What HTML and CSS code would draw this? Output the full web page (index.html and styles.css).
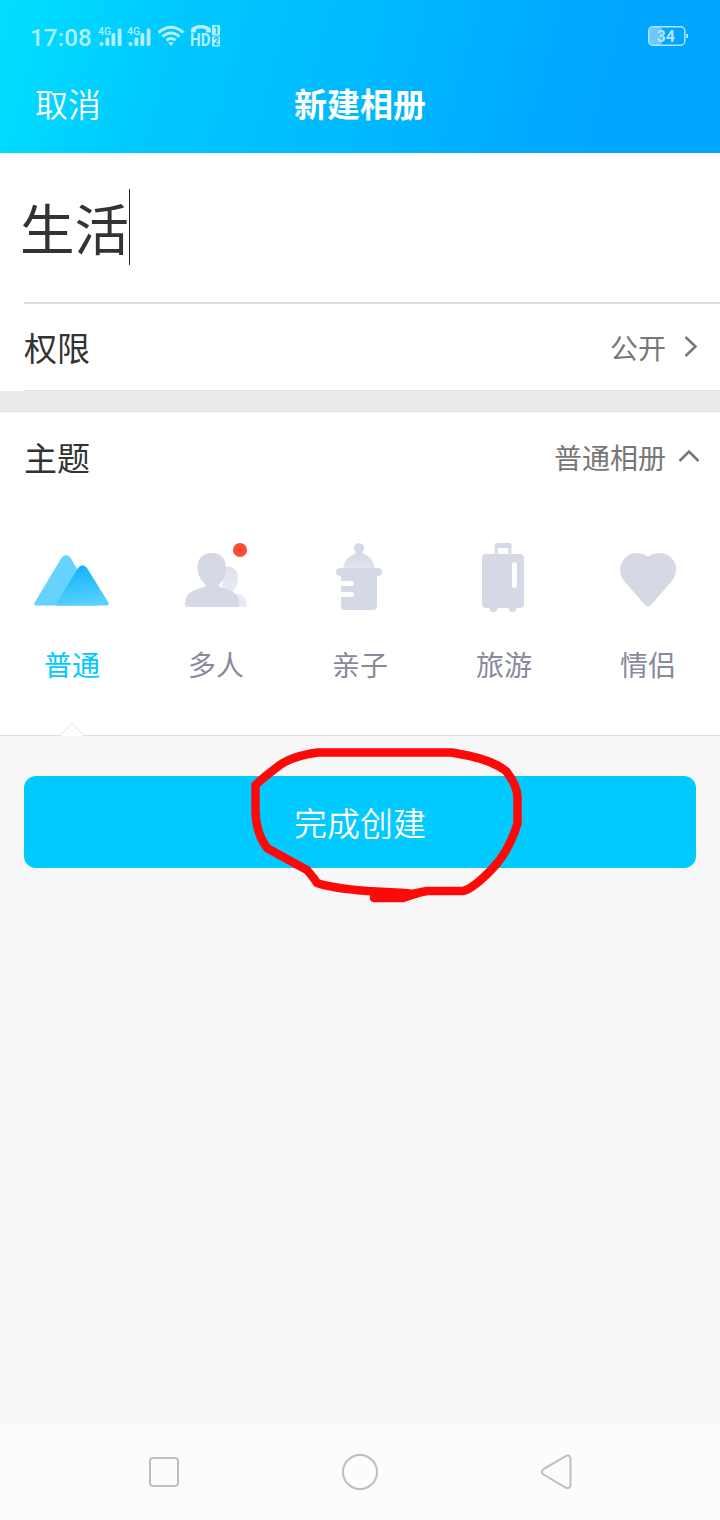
FILE: index.html
```html
<!DOCTYPE html>
<html lang="zh-CN">
<head>
<meta charset="utf-8">
<title>新建相册</title>
<link rel="stylesheet" href="styles.css">
</head>
<body>
<div class="screen">
  <header class="header">
    <div class="status">
      <span class="clock">17:08</span>
      <svg class="signal" width="25" height="24" viewBox="0 0 25 24"><text class="net" x="0" y="10.500">4G</text><g class="fill"><circle cx="3.500" cy="20" r="2"/><rect x="7.500" y="13.500" width="3.800" height="8.500" rx="1.500"/><rect x="13.500" y="9" width="3.800" height="13" rx="1.500"/><rect x="19.700" y="4.500" width="3.800" height="17.500" rx="1.500"/></g></svg>
      <svg class="signal second" width="25" height="24" viewBox="0 0 25 24"><text class="net" x="0" y="10.500">4G</text><g class="fill"><circle cx="3.500" cy="20" r="2"/><rect x="7.500" y="13.500" width="3.800" height="8.500" rx="1.500"/><rect x="13.500" y="9" width="3.800" height="13" rx="1.500"/><rect x="19.700" y="4.500" width="3.800" height="17.500" rx="1.500"/></g></svg>
      <svg class="wifi" width="28" height="22" viewBox="0 0 28 22"><g class="arc"><path d="M1.500 7.500Q14-3 26.500 7.500"/><path d="M5.500 11.500Q14 4.500 22.500 11.500"/><path d="M9.500 15.300Q14 11.800 18.500 15.300"/></g><path class="fill" d="M11.200 17.800Q14 16 16.800 17.800L14 21Z"/></svg>
      <svg class="volte" width="32" height="24" viewBox="0 0 32 24"><path class="fill" d="M1 8.500V5Q4 1 11 1Q18 1 21 5V8.500H16V5.500Q11 3.500 6 5.500V8.500Z"/><text class="hd" transform="translate(0 22.300) scale(.84 1)">HD</text><rect class="fill" x="22" y="1" width="8" height="10.500" rx="1"/><rect class="fill" x="22" y="12.500" width="8" height="10" rx="1"/><text class="sim" x="23.300" y="9.600">1</text><text class="sim" x="23.300" y="20.800">2</text></svg>
      <svg class="battery" width="41" height="20" viewBox="0 0 41 20"><rect class="charge" x="1" y="1" width="13" height="18" rx="3"/><rect class="case" x=".75" y=".75" width="36" height="18.500" rx="4"/><rect class="fill" x="38.200" y="8" width="1.800" height="4"/><text class="level" x="8.500" y="15.600">34</text></svg>
    </div>
    <div class="titlebar">
      <span class="cancel">取消</span>
      <h1 class="title">新建相册</h1>
      <span></span>
    </div>
  </header>

  <section class="name"><span class="value">生活</span><i class="caret"></i></section>

  <section class="row permission">
    <span class="label">权限</span>
    <span class="choice">公开</span>
    <svg class="chevron" width="22" height="26" viewBox="0 0 22 26"><path d="M6.500 3L16.500 12.500L6.500 22"/></svg>
  </section>
  <div class="gap"></div>

  <section class="themes">
    <div class="row">
      <span class="label">主题</span>
      <span class="choice">普通相册</span>
      <svg class="chevron up" width="24" height="20" viewBox="0 0 24 20"><path d="M2.500 14L12 4.500L21.500 14"/></svg>
    </div>
    <div class="tabs">
      <div class="tab active">
        <svg class="icon" width="144" height="80" viewBox="0 530 144 80"><defs><linearGradient id="hill" x1="0.4" y1="0" x2="0.6" y2="1"><stop offset="0" stop-color="#12b1f8"/><stop offset="1" stop-color="#59d2ff"/></linearGradient></defs><path fill="#66d3ff" d="M34.500 602.800L61.500 557.800Q66 552.200 70.500 557.800L98 605.500H36Q33.500 605.200 34.500 602.800Z"/><path fill="url(#hill)" d="M55 605.500L78 568Q82.500 562.500 87 568L108.400 602.500Q109.500 605.200 107 605.500Z"/></svg>
        <span>普通</span>
      </div>
      <div class="tab">
        <svg class="icon" width="144" height="80" viewBox="144 530 144 80"><defs><linearGradient id="friend" x1="0" y1="0" x2="0" y2="1"><stop offset="0" stop-color="#dfe2ed"/><stop offset=".7" stop-color="#e9ecf5"/><stop offset="1" stop-color="#e6e9f4"/></linearGradient></defs><path fill="url(#friend)" d="M224 567C233 565 238 571 238 578C238 584 236 588 233 591Q233 593 238 593.500Q247 596 247 605Q247 607 245 607H220Z"/><path class="shape" d="M212 553C221 553 226 559 226 568C226 576 223 581 218.500 585C219 587 223 588 228 589.500Q239 594 239 602.500Q239 607 235.500 607H187Q185 607 185 604Q185 593 196 589.500C201 588 205 587 206 585C200 580 197.500 574 197.500 567C197.500 558.500 203 553 212 553Z"/></svg>
        <i class="dot"></i>
        <span>多人</span>
      </div>
      <div class="tab">
        <svg class="icon" width="144" height="80" viewBox="288 530 144 80"><defs><linearGradient id="cap" x1="0" y1="0" x2="0" y2="1"><stop offset="0" stop-color="#d5d9e5"/><stop offset="1" stop-color="#e3e6f0"/></linearGradient></defs><path fill="url(#cap)" d="M343 568.500Q345 556 356 553.500H362Q373 556 375 568.500Z"/><path class="shape" d="M359 543A5.200 5.200 0 0 1 364.200 548.200Q364 550.500 362.500 552L363 555H355.500L355.800 552Q354 550.500 353.800 548.200A5.200 5.200 0 0 1 359 543Z"/><rect class="shape" x="336" y="568" width="46" height="8" rx="4"/><path class="shape" d="M341 575H377V606Q377 610 373 610H345Q341 610 341 606Z"/><path fill="#fff" d="M340 581H351.500Q354 581 354 583.500Q354 586 351.500 586H340ZM340 592H351.500Q354 592 354 594.500Q354 597 351.500 597H340Z"/></svg>
        <span>亲子</span>
      </div>
      <div class="tab">
        <svg class="icon" width="144" height="84" viewBox="432 530 144 84"><path fill="#dde0eb" d="M494.500 545H498V556H494.500ZM508 545H511.500V556H508Z"/><path class="shape" d="M496 543H510Q511.300 543 511.300 544.500V548H494.700V544.500Q494.700 543 496 543Z"/><rect class="shape" x="482" y="554" width="42" height="54" rx="4"/><circle class="shape" cx="493.500" cy="608" r="4"/><circle class="shape" cx="512.500" cy="608" r="4"/><rect x="512" y="562" width="5" height="26" rx="2.500" fill="#fff"/></svg>
        <span>旅游</span>
      </div>
      <div class="tab">
        <svg class="icon" width="144" height="80" viewBox="576 530 144 80"><path class="shape" d="M648 557C641 551.500 632 551.500 626 557C619 563 618 573 624 581L645.500 605.500Q648 608 650.500 605.500L672 581C678 573 677.500 563 670.500 557C664 551.500 655 551.500 648 557Z"/></svg>
        <span>情侣</span>
      </div>
    </div>
    <svg class="pointer" width="24" height="14" viewBox="0 0 24 14"><path fill="#fff" d="M1 14V12.500L12 1.500L23 12.500V14Z"/><path fill="none" stroke="#dedede" d="M1 12.500L12 1.500L23 12.500"/></svg>
  </section>

  <main class="actions">
    <div class="create">完成创建</div>
    <svg class="scribble" width="300" height="180" viewBox="240 735 300 180"><path d="M255.500 785V812Q256 833 267 848L285 858L307 870Q314 878 317 883Q331 888 367 891L405 893L412 894L427 891H463Q473 889 493 868Q509 851 517.500 823.500V797Q517 785 506 771Q493 761 470 756L452 752.500H318Q290 756 276 768Q265 776 255.500 785"/><path d="M374 898H403L418 893M374 897L405 894"/></svg>
  </main>

  <nav class="navbar">
    <svg width="196" height="96" viewBox="66 1424 196 96"><rect x="150" y="1458" width="28" height="28" rx="3"/></svg>
    <svg width="196" height="96" viewBox="262 1424 196 96"><circle cx="360" cy="1472" r="17"/></svg>
    <svg width="196" height="96" viewBox="458 1424 196 96"><path d="M543.500 1469.200L565.200 1456.300Q570.500 1454 570.500 1459V1485Q570.500 1489.500 565.500 1487.500L543.500 1474.500Q540 1471.800 543.500 1469.200Z"/></svg>
  </nav>
</div>
</body>
</html>
```
FILE: styles.css
```css
* { box-sizing: border-box; }
body { margin: 0; font-family: "Noto Sans CJK SC", sans-serif; }
svg { display: block; flex: none; }
.screen { width: 720px; height: 1520px; display: flex; flex-direction: column; background: #f7f7f7; overflow: hidden; }
.header { height: 153px; flex: none; color: #fff; background: linear-gradient(105deg, #00deff 0%, #00dbff 5%, #00c8ff 24%, #00b8ff 52%, #00a5ff 84%, #00a5ff 100%); }
.status { height: 55px; padding: 15px 31px 0 30px; display: flex; align-items: center; font-family: Roboto, sans-serif; color: #b3eeff; }
.status > * { margin-top: 2px; }
.clock { font-size: 24px; font-weight: 500; line-height: 28px; width: 67px; letter-spacing: .2px; padding-top: 4px; }
.fill { fill: #b5eeff; }
.net { font: 500 10.5px Roboto, sans-serif; fill: #b5eeff; }
.signal { margin-left: 1px; }
.second { margin-left: 4px; }
.wifi { margin-left: 5px; }
.arc { fill: none; stroke: #b5eeff; stroke-width: 3; }
.volte { margin-left: 5px; overflow: visible; }
.hd { font: 700 18px Roboto, sans-serif; fill: #b5eeff; }
.sim { font: 700 10px Roboto, sans-serif; fill: #00bfff; }
.battery { margin-left: auto; }
.charge { fill: #66c9ff; }
.case { fill: none; stroke: #b5e4ff; stroke-width: 1.500; }
.level { font: 700 16px Roboto, sans-serif; fill: #b5e4ff; }
.titlebar { height: 96px; padding: 0 35px; display: grid; grid-template-columns: 1fr auto 1fr; align-items: center; font-size: 33px; line-height: 48px; }
.cancel { font-weight: 350; }
.title { margin: 0; font-size: 33px; font-weight: 700; }
.name { height: 151px; flex: none; padding: 0 0 4px 20px; display: flex; align-items: center; background: linear-gradient(#ddd, #ddd) 24px 149px / 696px 2px no-repeat #fff; color: #333; }
.value { font-size: 54.500px; line-height: 76px; width: 109px; white-space: nowrap; }
.caret { width: 1px; height: 76px; background: #222; }
.row { height: 87px; padding: 0 18px 2px 24px; display: flex; align-items: center; font-size: 33px; line-height: 48px; color: #333; }
.permission { flex: none; background: linear-gradient(#ddd, #ddd) 24px 86px / 696px 1px no-repeat #fff; }
.label { flex: 1; }
.choice { font-size: 28px; color: #777; margin-right: 13px; }
.chevron { fill: none; stroke: #777; stroke-width: 2.500; margin-right: 1px; }
.themes .row { height: 92px; padding-bottom: 3px; }
.themes .choice { margin-right: 11px; }
.gap { height: 21px; flex: none; background: #ebebeb; border-bottom: 1px solid #ddd; }
.themes { position: relative; height: 324px; flex: none; background: #fff; border-bottom: 1px solid #dedede; }
.tabs { display: grid; grid-template-columns: repeat(5, 144px); padding-top: 26px; }
.tab { position: relative; height: 159px; display: flex; flex-direction: column; justify-content: space-between; align-items: center; font-size: 28px; line-height: 50px; color: #878a9a; }
.active { color: #00caff; }
.shape { fill: #d5d9e5; }
.dot { position: absolute; left: 89px; top: 13px; width: 14px; height: 14px; border-radius: 50%; background: #fb4b30; }
.pointer { position: absolute; left: 60px; bottom: -1px; }
.actions { position: relative; flex: 1; padding: 40px 24px 0; }
.create { height: 92px; border-radius: 12px; background: #00caff; color: #fff; font-size: 33px; font-weight: 350; line-height: 92px; text-align: center; }
.scribble { position: absolute; left: 240px; top: -1px; fill: none; stroke: #ff0808; stroke-width: 8.500; stroke-linecap: round; stroke-linejoin: round; filter: blur(.6px); }
.navbar { height: 96px; flex: none; display: flex; justify-content: center; background: #fcfcfc; fill: none; stroke: #bfbfbf; stroke-width: 2; }
```
